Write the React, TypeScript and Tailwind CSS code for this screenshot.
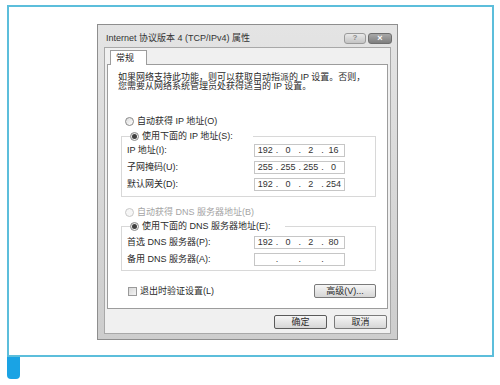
import React from 'react';

const FONT = "font-['Liberation_Sans','Noto_Sans_CJK_SC',sans-serif]";

function Radio({ checked, disabled }: { checked?: boolean; disabled?: boolean }) {
  return (
    <span
      className={`flex h-[9px] w-[9px] shrink-0 items-center justify-center rounded-full border ${
        disabled ? 'border-[#c8c8c8] bg-[#f6f6f6]' : 'border-[#8a8a8a] bg-linear-to-br from-[#dcdcdc] to-[#ffffff]'
      }`}
    >
      {checked && <span className="h-[5px] w-[5px] rounded-full bg-[#404040]" />}
    </span>
  );
}

function IpField({ parts }: { parts: string[] }) {
  return (
    <div className="flex h-[13px] w-[91px] items-center border border-[#c6c6c6] bg-white text-[9px] leading-none text-[#333]">
      {parts.map((p, i) => (
        <React.Fragment key={i}>
          <span className="flex-1 text-center">{p}</span>
          {i < 3 && <span className="w-[2px] text-center">.</span>}
        </React.Fragment>
      ))}
    </div>
  );
}

function Row({ label, parts }: { label: string; parts: string[] }) {
  return (
    <div className="flex h-[13px] items-center justify-between">
      <span className="text-[9px] leading-none text-[#2a2a2a]">{label}</span>
      <IpField parts={parts} />
    </div>
  );
}

function Button({ children, w, primary }: { children: React.ReactNode; w: string; primary?: boolean }) {
  return (
    <div
      className={`flex h-[14px] items-center justify-center rounded-[2px] border bg-linear-to-b from-[#f6f6f6] to-[#d6d6d6] text-[9px] leading-none text-[#2a2a2a] ${w} ${
        primary ? 'border-[#5a5a5a]' : 'border-[#7a7a7a]'
      }`}
    >
      {children}
    </div>
  );
}

export default function App() {
  return (
    <div className={`h-[385px] w-[500px] bg-white ${FONT}`}>
      <div className="ml-[7px] pt-[5px]">
        <div className="h-[352px] w-[487px] border-2 border-[#5cbedb] pl-[88px] pt-[17px]">
          {/* dialog */}
          <div className="w-[301px] border border-[#8e8e8e] bg-linear-to-b from-[#e4e4e4] to-[#cdcdcd] px-[6px] pb-[5px]">
            <div className="flex h-[22px] items-center justify-between">
              <span className="pl-[2px] pt-[4px] text-[9px] leading-none text-[#333]">
                Internet 协议版本 4 (TCP/IPv4) 属性
              </span>
              <div className="flex gap-[2px] pt-[4px] -mr-[1px]">
                <div className="flex h-[11px] w-[22px] items-center justify-center rounded-[3px] border border-[#9a9a9a] bg-linear-to-b from-[#e8e8e8] to-[#c4c4c4] text-[8px] font-bold leading-none text-[#8a8a8a]">
                  ?
                </div>
                <div className="flex h-[11px] w-[24px] items-center justify-center rounded-[3px] border border-[#6e6e6e] bg-linear-to-b from-[#a8a8a8] to-[#7e7e7e] text-[9px] font-bold leading-none text-white">
                  ×
                </div>
              </div>
            </div>
            {/* client area */}
            <div className="border border-[#a8a8a8] bg-[#f0f0f0] px-[2px] pb-[4px] pt-[2px]">
              <div className="ml-[3px] flex">
                <div className="-mb-px flex h-[15px] w-[37px] items-center border border-b-0 border-[#9c9c9c] bg-white pl-[5px] text-[9px] leading-none text-[#2a2a2a]">
                  常规
                </div>
              </div>
              <div className="border border-[#9c9c9c] bg-white pb-[10px]">
                <p className="ml-[10px] mt-[8px] text-[9px] leading-[9px] text-[#2a2a2a]">
                  如果网络支持此功能，则可以获取自动指派的 IP 设置。否则，
                  <br />
                  您需要从网络系统管理员处获得适当的 IP 设置。
                </p>
                <div className="ml-[17px] mt-[25px] flex h-[11px] items-center gap-[3px] text-[9px] leading-none text-[#2a2a2a]">
                  <Radio />
                  <span>自动获得 IP 地址(O)</span>
                </div>
                <fieldset className="ml-[13px] mr-[11px] mt-[4px] border border-[#d8d8d8] pb-[5px] pl-[5px] pr-[30px] pt-[2px]">
                  <legend className="ml-[3px] bg-white pr-[20px]">
                    <span className="flex h-[11px] items-center gap-[3px] text-[9px] leading-none text-[#2a2a2a]">
                      <Radio checked />
                      <span>使用下面的 IP 地址(S):</span>
                    </span>
                  </legend>
                  <div className="flex flex-col gap-[4px]">
                    <Row label="IP 地址(I):" parts={['192', '0', '2', '16']} />
                    <Row label="子网掩码(U):" parts={['255', '255', '255', '0']} />
                    <Row label="默认网关(D):" parts={['192', '0', '2', '254']} />
                  </div>
                </fieldset>
                <div className="ml-[17px] mt-[10px] flex h-[11px] items-center gap-[3px] text-[9px] leading-none text-[#a4a4a4]">
                  <Radio disabled />
                  <span>自动获得 DNS 服务器地址(B)</span>
                </div>
                <fieldset className="ml-[13px] mr-[11px] mt-[3px] border border-[#d8d8d8] pb-[4px] pl-[5px] pr-[30px] pt-[4px]">
                  <legend className="ml-[3px] bg-white pr-[14px]">
                    <span className="flex h-[11px] items-center gap-[3px] text-[9px] leading-none text-[#2a2a2a]">
                      <Radio checked />
                      <span>使用下面的 DNS 服务器地址(E):</span>
                    </span>
                  </legend>
                  <div className="flex flex-col gap-[4px]">
                    <Row label="首选 DNS 服务器(P):" parts={['192', '0', '2', '80']} />
                    <Row label="备用 DNS 服务器(A):" parts={['', '', '', '']} />
                  </div>
                </fieldset>
                <div className="ml-[20px] mr-[11px] mt-[13px] flex h-[14px] items-center justify-between">
                  <div className="flex items-center gap-[3px] text-[9px] leading-none text-[#2a2a2a]">
                    <span className="h-[9px] w-[9px] border border-[#9a9a9a] bg-linear-to-br from-[#d8d8d8] to-[#f4f4f4]" />
                    <span>退出时验证设置(L)</span>
                  </div>
                  <Button w="w-[62px]">高级(V)...</Button>
                </div>
              </div>
              <div className="mt-[6px] flex justify-end gap-[7px] pr-[1px]">
                <Button w="w-[53px]" primary>
                  确定
                </Button>
                <Button w="w-[53px]">取消</Button>
              </div>
            </div>
          </div>
        </div>
        <div className="h-[22px] w-[13px] rounded-b-[4px] bg-[#1aa3e4]" />
      </div>
    </div>
  );
}
